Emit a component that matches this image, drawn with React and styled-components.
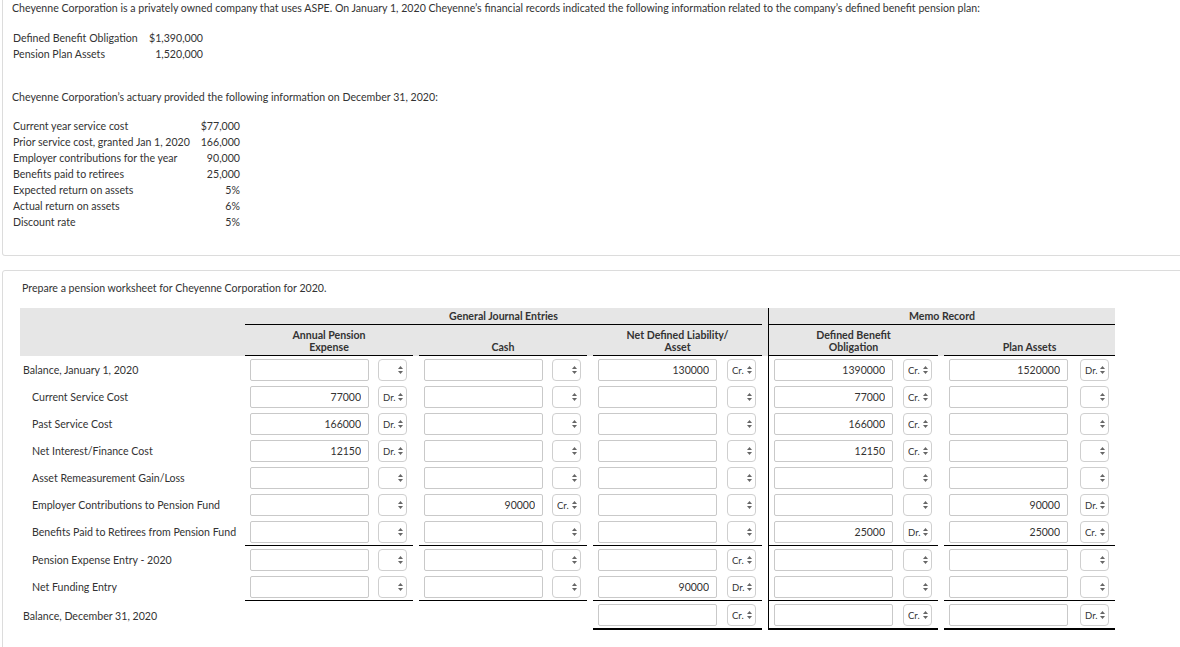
import React from "react";
import styled, { createGlobalStyle } from "styled-components";

const GlobalStyle = createGlobalStyle`
  html, body {
    margin: 0;
    padding: 0;
    background: #fff;
  }
  body {
    font-family: Lato, "Open Sans", "Liberation Sans", sans-serif;
    font-size: 10.6px;
    color: #333;
    overflow: hidden;
  }
`;

const Page = styled.div`
  width: 1180px;
  height: 647px;
  overflow: hidden;
  padding-left: 2px;
  box-sizing: border-box;
`;

const Panel = styled.section`
  width: 1230px;
  box-sizing: border-box;
  border: 1px solid #dcdcdc;
  border-radius: 3px;
`;

const FactsPanel = styled(Panel)`
  border-top: none;
  border-radius: 0 0 3px 3px;
  padding: 0 10px 25px 9px;
`;

const WorkPanel = styled(Panel)`
  margin-top: 14px;
  padding: 9px 0 40px 17px;
`;

const Para = styled.p`
  margin: ${(p) => p.$top || 0}px 0 0;
  line-height: 16px;
  padding-left: ${(p) => p.$indent || 0}px;
  white-space: nowrap;
`;

const Facts = styled.div`
  display: grid;
  grid-template-columns: ${(p) => p.$label}px ${(p) => p.$value}px;
  line-height: 16px;
  margin-top: ${(p) => p.$top}px;
  padding-left: 1px;
  white-space: nowrap;
`;

const FactValue = styled.span`
  text-align: right;
`;

const Sheet = styled.div`
  width: 1095px;
  margin-top: 12px;
`;

const HeadBand = styled.div`
  background: #e6e6e6;
`;

const Row = styled.div`
  display: grid;
  grid-template-columns: 219px 168px 168px 169px 170px 171px;
  column-gap: 6px;
`;

const GroupTitle = styled.div`
  grid-column: ${(p) => p.$span};
  height: 17px;
  box-sizing: border-box;
  border-bottom: 1.5px solid #000;
  border-left: ${(p) => (p.$divider ? "1.5px solid #000" : "none")};
  font-weight: 700;
  text-align: center;
  line-height: 17px;
`;

const ColTitle = styled.div`
  height: 31px;
  box-sizing: border-box;
  border-bottom: 1.5px solid #000;
  border-left: ${(p) => (p.$divider ? "1.5px solid #000" : "none")};
  display: flex;
  flex-direction: column;
  justify-content: flex-end;
  align-items: center;
  padding-bottom: 2px;
  font-weight: 700;
  line-height: 11.5px;
  text-align: center;
`;

const Label = styled.div`
  display: flex;
  align-items: center;
  padding-left: ${(p) => (p.$indent ? 12 : 3)}px;
  white-space: nowrap;
`;

const Group = styled.div`
  display: flex;
  justify-content: space-between;
  align-items: center;
  box-sizing: border-box;
  padding: 3px 6px 2px 5px;
  border-left: ${(p) => (p.$divider ? "1.5px solid #000" : "none")};
  border-bottom: ${(p) =>
    p.$rule === "thick" ? "2.5px solid #000" : p.$rule === "thin" ? "1.5px solid #000" : "none"};
`;

const Amount = styled.input`
  width: 119px;
  height: 22px;
  box-sizing: border-box;
  margin: 0;
  border: 1px solid #c9c9c9;
  border-radius: 2px;
  padding: 0 7px;
  text-align: right;
  font-family: inherit;
  font-size: 10.5px;
  color: #333;
  background: #fff;
  outline: none;
`;

const SelectWrap = styled.div`
  position: relative;
  width: 29px;
  height: 22px;
`;

const Select = styled.select`
  appearance: none;
  -webkit-appearance: none;
  width: 100%;
  height: 100%;
  box-sizing: border-box;
  margin: 0;
  border: 1px solid #cfcfcf;
  border-radius: 4px;
  background: #fff;
  padding: 0 0 0 4px;
  font-family: inherit;
  font-size: 9.5px;
  color: #333;
  outline: none;
`;

const Arrows = styled.svg`
  position: absolute;
  right: 4px;
  top: 7px;
  pointer-events: none;
`;

const DrCr = ({ value }) => (
  <SelectWrap>
    <Select defaultValue={value || ""}>
      <option value=""></option>
      <option value="Dr.">Dr.</option>
      <option value="Cr.">Cr.</option>
    </Select>
    <Arrows width="5" height="8" viewBox="0 0 5 8">
      <path d="M2.5 0 L5 3 L0 3 Z" fill="#666" />
      <path d="M2.5 8 L5 5 L0 5 Z" fill="#666" />
    </Arrows>
  </SelectWrap>
);

const rows = [
  { label: "Balance, January 1, 2020", cells: [["", ""], ["", ""], ["130000", "Cr."], ["1390000", "Cr."], ["1520000", "Dr."]] },
  { label: "Current Service Cost", indent: true, cells: [["77000", "Dr."], ["", ""], ["", ""], ["77000", "Cr."], ["", ""]] },
  { label: "Past Service Cost", indent: true, cells: [["166000", "Dr."], ["", ""], ["", ""], ["166000", "Cr."], ["", ""]] },
  { label: "Net Interest/Finance Cost", indent: true, cells: [["12150", "Dr."], ["", ""], ["", ""], ["12150", "Cr."], ["", ""]] },
  { label: "Asset Remeasurement Gain/Loss", indent: true, cells: [["", ""], ["", ""], ["", ""], ["", ""], ["", ""]] },
  { label: "Employer Contributions to Pension Fund", indent: true, cells: [["", ""], ["90000", "Cr."], ["", ""], ["", ""], ["90000", "Dr."]] },
  { label: "Benefits Paid to Retirees from Pension Fund", indent: true, rule: "thin", cells: [["", ""], ["", ""], ["", ""], ["25000", "Dr."], ["25000", "Cr."]] },
  { label: "Pension Expense Entry - 2020", indent: true, cells: [["", ""], ["", ""], ["", "Cr."], ["", ""], ["", ""]] },
  { label: "Net Funding Entry", indent: true, rule: "thin", cells: [["", ""], ["", ""], ["90000", "Dr."], ["", ""], ["", ""]] },
  { label: "Balance, December 31, 2020", rule: "thick", cells: [null, null, ["", "Cr."], ["", "Cr."], ["", "Dr."]] },
];

const columns = [
  ["Annual Pension", "Expense"],
  ["Cash"],
  ["Net Defined Liability/", "Asset"],
  ["Defined Benefit", "Obligation"],
  ["Plan Assets"],
];

export default function App() {
  return (
    <Page>
      <GlobalStyle />
      <FactsPanel>
        <Para>
          Cheyenne Corporation is a privately owned company that uses ASPE. On January 1, 2020 Cheyenne’s financial
          records indicated the following information related to the company’s defined benefit pension plan:
        </Para>
        <Facts $label={135} $value={55} $top={14}>
          <span>Defined Benefit Obligation</span>
          <FactValue>$1,390,000</FactValue>
          <span>Pension Plan Assets</span>
          <FactValue>1,520,000</FactValue>
        </Facts>
        <Para $top={27}>Cheyenne Corporation’s actuary provided the following information on December 31, 2020:</Para>
        <Facts $label={180} $value={47} $top={13}>
          <span>Current year service cost</span>
          <FactValue>$77,000</FactValue>
          <span>Prior service cost, granted Jan 1, 2020</span>
          <FactValue>166,000</FactValue>
          <span>Employer contributions for the year</span>
          <FactValue>90,000</FactValue>
          <span>Benefits paid to retirees</span>
          <FactValue>25,000</FactValue>
          <span>Expected return on assets</span>
          <FactValue>5%</FactValue>
          <span>Actual return on assets</span>
          <FactValue>6%</FactValue>
          <span>Discount rate</span>
          <FactValue>5%</FactValue>
        </Facts>
      </FactsPanel>

      <WorkPanel>
        <Para $indent={2}>Prepare a pension worksheet for Cheyenne Corporation for 2020.</Para>
        <Sheet>
          <HeadBand>
            <Row>
              <div />
              <GroupTitle $span="2 / 5">General Journal Entries</GroupTitle>
              <GroupTitle $span="5 / 7" $divider>
                Memo Record
              </GroupTitle>
            </Row>
            <Row>
              <div />
              {columns.map((lines, i) => (
                <ColTitle key={i} $divider={i === 3}>
                  {lines.map((l) => (
                    <span key={l}>{l}</span>
                  ))}
                </ColTitle>
              ))}
            </Row>
          </HeadBand>
          {rows.map((row) => (
            <Row key={row.label}>
              <Label $indent={row.indent}>{row.label}</Label>
              {row.cells.map((cell, i) =>
                cell ? (
                  <Group key={i} $divider={i === 3} $rule={row.rule}>
                    <Amount defaultValue={cell[0]} />
                    <DrCr value={cell[1]} />
                  </Group>
                ) : (
                  <Group key={i} $divider={i === 3} />
                )
              )}
            </Row>
          ))}
        </Sheet>
      </WorkPanel>
    </Page>
  );
}
